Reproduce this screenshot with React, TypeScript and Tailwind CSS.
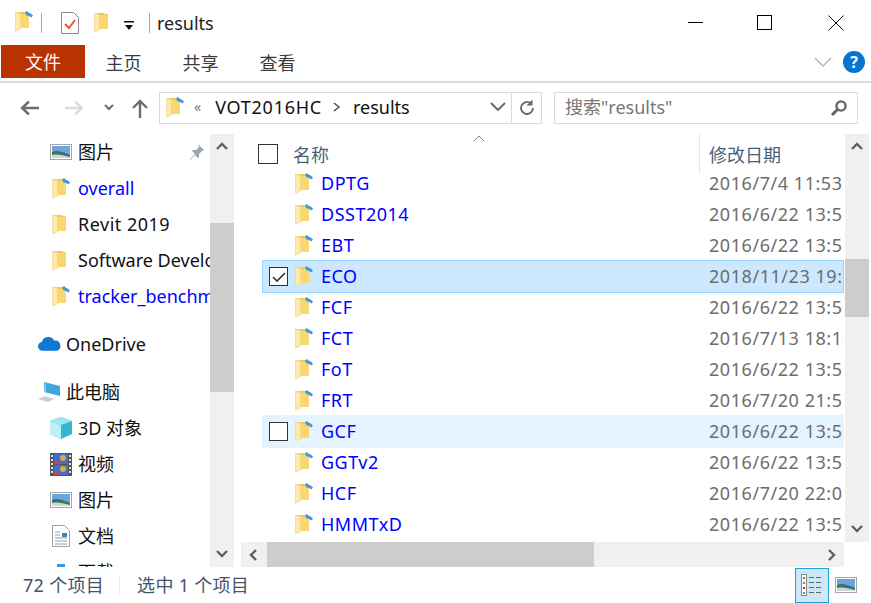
const FolderIcon = ({ pin }: { pin?: boolean }) => (
  <svg width="18" height="21" viewBox="0 0 18 21" className="shrink-0">
    <path d="M2 1h8l1 1h3v15H2z" fill="#f0c65f" />
    <path d="M5 3h9v14H5z" fill="#fad86f" />
    <path d="M0.500 1 5.500 2.500V18L0.500 20z" fill="#fdeaa9" stroke="#ecd08a" strokeWidth="0.6" />
    {pin && <path d="M10 1.500 12 0l2 2 1 0 3 2.500-1.500 2-2.500-1.500-1-.5-1.500 0z" fill="#3f97dd" />}
  </svg>
)

const PictureIcon = () => (
  <svg width="22" height="16" viewBox="0 0 22 16" className="shrink-0">
    <rect x="0.5" y="0.5" width="21" height="15" fill="#fff" stroke="#a6a6a6" />
    <rect x="2" y="2" width="18" height="12" fill="#6aa5e0" />
    <path d="M2 8c5-2 8-1 18 3v3H2z" fill="#3f7063" />
    <path d="M2 11c6-1 10 0 18 2v1H2z" fill="#c7d9d7" />
  </svg>
)

const Chevron = ({ dir }: { dir: "up" | "down" | "left" | "right" }) => {
  const points = {
    up: "1,8 6,3 11,8",
    down: "1,4 6,9 11,4",
    left: "8,1 3,6 8,11",
    right: "4,1 9,6 4,11",
  }[dir]
  return (
    <svg width="12" height="12" viewBox="0 0 12 12">
      <polyline points={points} fill="none" stroke="#606060" strokeWidth="2.4" />
    </svg>
  )
}

const Checkbox = ({ checked, size }: { checked?: boolean; size: string }) => (
  <div className={`${size} border border-[#333] bg-white flex items-center justify-center shrink-0`}>
    {checked && (
      <svg width="14" height="12" viewBox="0 0 14 12">
        <polyline points="1,6 5,10 13,2" fill="none" stroke="#333" strokeWidth="1.6" />
      </svg>
    )}
  </div>
)

const rows = [
  { name: "DPTG", date: "2016/7/4 11:53" },
  { name: "DSST2014", date: "2016/6/22 13:56" },
  { name: "EBT", date: "2016/6/22 13:56" },
  { name: "ECO", date: "2018/11/23 19:21", state: "selected" },
  { name: "FCF", date: "2016/6/22 13:56" },
  { name: "FCT", date: "2016/7/13 18:14" },
  { name: "FoT", date: "2016/6/22 13:56" },
  { name: "FRT", date: "2016/7/20 21:56" },
  { name: "GCF", date: "2016/6/22 13:56", state: "hover" },
  { name: "GGTv2", date: "2016/6/22 13:56" },
  { name: "HCF", date: "2016/7/20 22:04" },
  { name: "HMMTxD", date: "2016/6/22 13:56" },
]

const NavRow = ({ icon, label, indent, className, extra }: { icon: React.ReactNode; label: string; indent: string; className?: string; extra?: React.ReactNode }) => (
  <div className={`h-9 shrink-0 flex items-center whitespace-nowrap overflow-hidden ${indent} ${className || "text-[#111]"}`}>
    <div className="w-[30px] shrink-0 flex items-center justify-center -ml-[2px] mr-[2px]">{icon}</div>
    <span>{label}</span>
    {extra}
  </div>
)

export default function App() {
  return (
    <div className="w-[871px] h-[603px] bg-white flex flex-col overflow-hidden text-[18px] leading-none text-[#111] font-['Noto_Sans','Noto_Sans_CJK_SC',sans-serif]">
      {/* title bar */}
      <div className="h-[45px] shrink-0 flex items-center">
        <div className="ml-[15px] mb-[2px]"><FolderIcon pin /></div>
        <div className="w-px h-5 bg-[#a8a8a8] ml-[8px]" />
        <svg width="18" height="22" viewBox="0 0 18 22" className="ml-[19px]">
          <path d="M.5.5h12l5 5v16H.5z" fill="#fff" stroke="#8a8a8a" />
          <polyline points="4,12 8,16 14,8" fill="none" stroke="#e8562a" strokeWidth="2" />
        </svg>
        <div className="ml-[15px]"><FolderIcon /></div>
        <svg width="10" height="10" viewBox="0 0 10 10" className="ml-[12px] mt-[6px]">
          <rect x="0" y="0" width="10" height="1.5" fill="#111" />
          <path d="M1 4h8L5 9z" fill="#111" />
        </svg>
        <div className="w-px h-5 bg-[#a8a8a8] ml-[15px]" />
        <span className="ml-[7px] text-[#222]">results</span>
        <div className="ml-auto flex items-center">
          <div className="w-[15px] h-px bg-black mr-[54px]" />
          <div className="w-[15px] h-[15px] border border-black mr-[56px]" />
          <svg width="16" height="16" viewBox="0 0 16 16" className="mr-[27px]">
            <path d="M.5.5l15 15M15.500.5l-15 15" stroke="#111" fill="none" />
          </svg>
        </div>
      </div>

      {/* ribbon tabs */}
      <div className="h-[38px] shrink-0 flex border-b-2 border-[#dcdcdc] text-[#3b3b3b] pb-[3px]">
        <div className="ml-px w-[84px] bg-[#b83300] text-white flex items-center justify-center">文件</div>
        <div className="ml-[20px] w-[37px] pt-[2px] flex items-center justify-center">主页</div>
        <div className="ml-[40px] w-[37px] pt-[2px] flex items-center justify-center">共享</div>
        <div className="ml-[40px] w-[37px] pt-[2px] flex items-center justify-center">查看</div>
        <div className="ml-auto flex items-center gap-[11px] mr-[6px]">
          <svg width="18" height="10" viewBox="0 0 18 10">
            <polyline points="1,1 9,9 17,1" fill="none" stroke="#b5b5b5" strokeWidth="1.4" />
          </svg>
          <div className="w-[22px] h-[22px] rounded-full bg-[#0a72cf] text-white text-[16px] font-bold flex items-center justify-center">?</div>
        </div>
      </div>

      {/* address row */}
      <div className="h-[51px] shrink-0 flex items-start pt-[9px]">
        <svg width="20" height="16" viewBox="0 0 20 16" className="ml-[20px] mt-2">
          <path d="M19 8H2M9 1.5 2 8l7 6.5" fill="none" stroke="#6d6d6d" strokeWidth="2.4" />
        </svg>
        <svg width="20" height="16" viewBox="0 0 20 16" className="ml-[24px] mt-2">
          <path d="M1 8h17M11 1.5 18 8l-7 6.5" fill="none" stroke="#dadada" strokeWidth="2.4" />
        </svg>
        <svg width="10" height="8" viewBox="0 0 10 8" className="ml-[20px] mt-3">
          <polyline points="1,1 5,5 9,1" fill="none" stroke="#6d6d6d" strokeWidth="2" />
        </svg>
        <svg width="18" height="20" viewBox="0 0 18 20" className="ml-[17px] mt-[7px]">
          <path d="M9 19V2M2 9l7-7 7 7" fill="none" stroke="#6d6d6d" strokeWidth="2.4" />
        </svg>
        <div className="ml-[10px] w-[383px] h-[32px] border border-[#d9d9d9] flex items-center">
          <div className="w-[352px] h-full pb-[2px] flex items-center border-r border-[#d9d9d9] shrink-0">
            <div className="ml-[6px]"><FolderIcon pin /></div>
            <span className="ml-[10px] text-[#777] text-[14px]">«</span>
            <span className="ml-[14px] text-[#111] tracking-[0.75px]">VOT2016HC</span>
            <svg width="8" height="10" viewBox="0 0 8 10" className="ml-[11px]">
              <polyline points="1,1 6,5 1,9" fill="none" stroke="#555" strokeWidth="1.6" />
            </svg>
            <span className="ml-[12px] text-[#111]">results</span>
            <svg width="16" height="10" viewBox="0 0 16 10" className="ml-auto mr-[5px]">
              <polyline points="1,1 8,8 15,1" fill="none" stroke="#666" strokeWidth="1.8" />
            </svg>
          </div>
          <svg width="18" height="18" viewBox="0 0 18 18" className="ml-[6px]">
            <path d="M15 9a6 6 0 1 1-2-4.500" fill="none" stroke="#666" strokeWidth="1.8" />
            <path d="M14.500 0.500v6h-6z" fill="#666" />
          </svg>
        </div>
        <div className="ml-[12px] w-[304px] h-[32px] border border-[#d9d9d9] flex items-center">
          <span className="ml-[10px] pb-[2px] text-[#777]">搜索"results"</span>
          <svg width="18" height="18" viewBox="0 0 18 18" className="ml-auto mr-[9px]">
            <circle cx="11" cy="7" r="4.600" fill="none" stroke="#666" strokeWidth="2.400" />
            <path d="M7.500 10.500 2 16" stroke="#666" strokeWidth="3" />
          </svg>
        </div>
      </div>

      {/* body */}
      <div className="h-[433px] shrink-0 flex">
        {/* nav pane */}
        <div className="w-[210px] shrink-0 flex flex-col overflow-hidden">
          <NavRow
            indent="pl-[48px]"
            icon={<PictureIcon />}
            label="图片"
            extra={
              <svg width="16" height="16" viewBox="0 0 16 16" className="ml-auto mr-[6px]">
                <path d="M10 0l6 6-2 1-3 3 0 3-1 1-3-3-5 5 0-1 5-5-3-3 1-1h3l3-3z" fill="#9aa5ae" />
              </svg>
            }
          />
          <NavRow indent="pl-[48px]" icon={<FolderIcon pin />} label="overall" className="text-[#0000ff]" />
          <NavRow indent="pl-[48px]" icon={<FolderIcon />} label="Revit 2019" className="text-[#111] tracking-[0.5px]" />
          <NavRow indent="pl-[48px]" icon={<FolderIcon />} label="Software Development Kit" />
          <NavRow indent="pl-[48px]" icon={<FolderIcon pin />} label="tracker_benchmark" className="text-[#0000ff]" />
          <NavRow
            indent="pl-[36px] mt-3"
            icon={
              <svg width="23" height="16" viewBox="0 0 24 16">
                <path d="M5 15a4.500 4.500 0 0 1-1-9 7 7 0 0 1 13-1.500 5.500 5.500 0 0 1 3 10.500z" fill="#0f78d4" />
              </svg>
            }
            label="OneDrive"
          />
          <NavRow
            indent="pl-[36px] mt-3"
            icon={
              <svg width="24" height="22" viewBox="0 0 24 22">
                <path d="M7 1l16 4v10L7 11z" fill="#3ea7e0" />
                <path d="M8 1 7 11l2 .500V2z" fill="#8fd0f0" />
                <path d="M1 18l7-3 9 3-6 3z" fill="#c9ced3" />
              </svg>
            }
            label="此电脑"
          />
          <NavRow
            indent="pl-[48px]"
            icon={
              <svg width="22" height="22" viewBox="0 0 22 22">
                <path d="M11 0l11 4v13l-11 5L0 17V4z" fill="#35b6cf" />
                <path d="M0 4l11 4 11-4-11-4z" fill="#9fe8f1" />
                <path d="M0 4l11 4v14L0 17z" fill="#bdf1f5" />
              </svg>
            }
            label="3D 对象"
          />
          <NavRow
            indent="pl-[48px]"
            icon={
              <svg width="22" height="23" viewBox="0 0 22 23">
                <rect width="22" height="23" fill="#555" />
                <path d="M1 2h2v2H1zM1 6h2v2H1zM1 10h2v2H1zM1 14h2v2H1zM1 18h2v2H1zM19 2h2v2h-2zM19 6h2v2h-2zM19 10h2v2h-2zM19 14h2v2h-2zM19 18h2v2h-2z" fill="#ddd" />
                <rect x="4" y="1" width="14" height="10" fill="#3f6fd0" />
                <rect x="4" y="12" width="14" height="10" fill="#3f6fd0" />
                <circle cx="13" cy="5" r="3" fill="#e8a23a" />
                <circle cx="13" cy="16" r="3" fill="#e8a23a" />
                <path d="M4 11V8l5 1 2 2zM4 22v-3l5 1 2 2z" fill="#c9493a" />
              </svg>
            }
            label="视频"
          />
          <NavRow indent="pl-[48px]" icon={<PictureIcon />} label="图片" />
          <NavRow
            indent="pl-[48px]"
            icon={
              <svg width="18" height="22" viewBox="0 0 18 22">
                <path d="M.5.5h12l5 5v16H.5z" fill="#fff" stroke="#a0a0a0" />
                <path d="M3 7h5M3 10h5M3 13h12M3 16h12M3 19h12" stroke="#8ca0b5" />
                <rect x="10" y="8" width="5" height="4" fill="#4a7f9e" />
              </svg>
            }
            label="文档"
          />
          <NavRow
            indent="pl-[48px]"
            icon={<div className="w-2 h-4 bg-[#3f97dd]" />}
            label="下载"
          />
        </div>
        <div className="w-6 shrink-0 bg-[#f0f0f0] flex flex-col">
          <div className="h-[26px] flex items-center justify-center"><Chevron dir="up" /></div>
          <div className="h-[63px]" />
          <div className="h-[169px] bg-[#cdcdcd]" />
          <div className="flex-1 flex items-end justify-center pb-[8px]"><Chevron dir="down" /></div>
        </div>
        <div className="w-[7px] shrink-0" />

        {/* file list */}
        <div className="w-[603px] shrink-0 flex flex-col">
          <div className="h-[408px] flex flex-col">
            <div className="h-[34px] shrink-0 flex relative text-[#4c607a]">
              <div className="ml-[17px] mt-[10px]"><Checkbox size="w-[20px] h-[20px]" /></div>
              <span className="ml-[15px] mt-[12px]">名称</span>
              <svg width="12" height="7" viewBox="0 0 12 7" className="absolute left-[232px] top-[1px]">
                <polyline points="1,6 6,1 11,6" fill="none" stroke="#888" />
              </svg>
              <div className="absolute left-[458px] top-0 h-[40px] w-px bg-[#e5e5e5]" />
              <span className="absolute left-[468px] top-[12px]">修改日期</span>
            </div>
            <div className="h-[374px] overflow-hidden">
              {rows.map((r) => (
                <div
                  key={r.name}
                  className={
                    r.state === "selected"
                      ? "h-[33px] -my-px relative ml-[21px] border border-[#99d1ff] bg-[#cce8ff] flex items-center whitespace-nowrap overflow-hidden"
                      : r.state === "hover"
                        ? "h-[33px] -my-px relative ml-[21px] border border-[#e5f3ff] bg-[#e5f3ff] flex items-center whitespace-nowrap overflow-hidden"
                        : "h-[31px] ml-[21px] border border-transparent flex items-center whitespace-nowrap overflow-hidden"
                  }
                >
                  <div className="w-[32px] shrink-0 pl-[6px]">
                    {r.state && <Checkbox size="w-[19px] h-[19px]" checked={r.state === "selected"} />}
                  </div>
                  <FolderIcon pin />
                  <span className="ml-[8px] pb-[2px] w-[388px] shrink-0 text-[#0000ff] tracking-[0.5px]">{r.name}</span>
                  <span className="pb-[2px] text-[#6d6d6d] tracking-[0.55px]">{r.date}</span>
                </div>
              ))}
            </div>
          </div>
          <div className="h-[25px] bg-[#f0f0f0] flex items-center">
            <div className="w-[26px] flex justify-center"><Chevron dir="left" /></div>
            <div className="w-[327px] h-full bg-[#cdcdcd]" />
            <div className="ml-auto w-[26px] flex justify-center"><Chevron dir="right" /></div>
          </div>
        </div>
        <div className="w-px shrink-0" />
        <div className="w-6 shrink-0 h-[408px] bg-[#f0f0f0] flex flex-col">
          <div className="h-[26px] flex items-center justify-center"><Chevron dir="up" /></div>
          <div className="h-[99px]" />
          <div className="h-[58px] bg-[#cdcdcd]" />
          <div className="flex-1 flex items-end justify-center pb-[8px]"><Chevron dir="down" /></div>
        </div>
      </div>

      {/* status bar */}
      <div className="flex-1 flex items-center text-[#44546a] tracking-[0.3px]">
        <span className="ml-[23px]">72 个项目</span>
        <div className="ml-[15px] w-px h-5 bg-[#eeeeee]" />
        <span className="ml-[17px]">选中 1 个项目</span>
        <div className="ml-auto mr-[14px] flex items-center gap-[6px]">
          <div className="w-[34px] h-[35px] border border-[#26a0da] bg-[#cce8f6] flex items-center justify-center">
            <svg width="22" height="22" viewBox="0 0 22 22">
              <rect x="0.500" y="0.500" width="5" height="21" fill="#fff" stroke="#888" />
              <rect x="2" y="3" width="2" height="2" fill="#3f7fb5" />
              <rect x="2" y="8" width="2" height="2" fill="#a08a20" />
              <rect x="2" y="13" width="2" height="2" fill="#b03020" />
              <rect x="2" y="18" width="2" height="2" fill="#888" />
              <path d="M8 3.500h5M15 3.500h5M8 8.500h5M15 8.500h5M8 13.500h5M15 13.500h5M8 18.500h5M15 18.500h5" stroke="#666" />
            </svg>
          </div>
          <PictureIcon />
        </div>
      </div>
    </div>
  )
}
